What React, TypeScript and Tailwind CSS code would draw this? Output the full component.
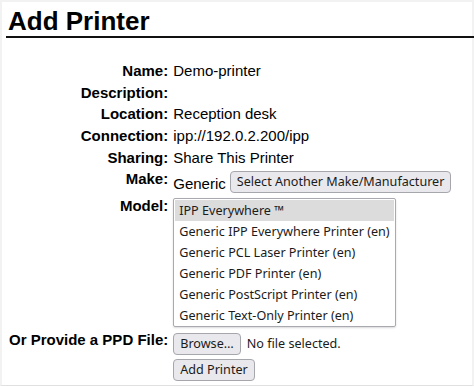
import React from "react";

const sans = { fontFamily: '"Liberation Sans", Arial, sans-serif' };
const ui = { fontFamily: '"Noto Sans", "Open Sans", sans-serif' };

const options = [
  "IPP Everywhere ™",
  "Generic IPP Everywhere Printer (en)",
  "Generic PCL Laser Printer (en)",
  "Generic PDF Printer (en)",
  "Generic PostScript Printer (en)",
  "Generic Text-Only Printer (en)",
];

function Btn({ children, className = "" }: { children: React.ReactNode; className?: string }) {
  return (
    <span
      className={`inline-flex items-center h-[22px] px-[6px] rounded-[4px] border border-[#a6a6ad] bg-[#e9e9ed] text-[12.6px] text-[#1b1b1b] leading-none ${className}`}
      style={ui}
    >
      {children}
    </span>
  );
}

export default function App() {
  return (
    <div className="w-[474px] h-[386px] bg-white overflow-hidden text-black" style={sans}>
      <div className="h-full border-t-2 border-x-2 border-[#f2f2f2] border-b border-b-[#e0e0e0]">
        <h2 className="ml-[4px] mr-[-2px] pt-[4px] h-[36px] border-b-2 border-[#111] text-[26px] font-bold leading-[30px] pl-[2px]">
          Add Printer
        </h2>
        <div className="grid grid-cols-[max-content_1fr] gap-x-[5px] pl-[7px] pt-[24px] text-[15px] leading-[17px]">
          <div className="text-right font-bold h-[21.7px]">Name:</div>
          <div className="h-[21.7px]">Demo-printer</div>
          <div className="text-right font-bold h-[21.7px]">Description:</div>
          <div className="h-[21.7px]"></div>
          <div className="text-right font-bold h-[21.7px]">Location:</div>
          <div className="h-[21.7px]">Reception desk</div>
          <div className="text-right font-bold h-[21.7px]">Connection:</div>
          <div className="h-[21.7px]">ipp://192.0.2.200/ipp</div>
          <div className="text-right font-bold h-[21.2px]">Sharing:</div>
          <div className="h-[21.2px]">Share This Printer</div>

          <div className="text-right font-bold h-[26px]">Make:</div>
          <div className="h-[26px] flex items-center gap-[3px] pb-[2px]">
            <span className="mt-[3px]">Generic</span>
            <Btn className="ml-[1px]">Select Another Make/Manufacturer</Btn>
          </div>

          <div className="text-right font-bold pt-[1px]">Model:</div>
          <div className="pt-[2px] pb-[3px]">
            <div
              className="w-[223px] h-[129px] border border-[#a9a9b0] rounded-[2px] shadow-[0_1px_2px_rgba(0,0,0,0.15)] p-[1px] text-[12.6px] text-[#1b1b1b]"
              style={ui}
            >
              {options.map((o, i) => (
                <div
                  key={o}
                  className={`h-[21px] flex items-center pl-[4px] whitespace-nowrap ${i === 0 ? "bg-[#dcdcdc]" : ""}`}
                >
                  {o}
                </div>
              ))}
            </div>
          </div>

          <div className="text-right font-bold pt-[1px]">Or Provide a PPD File:</div>
          <div className="flex items-center gap-[6px] pt-[3px]">
            <Btn>Browse…</Btn>
            <span className="text-[12.6px] text-[#1b1b1b]" style={ui}>No file selected.</span>
          </div>

          <div></div>
          <div className="pt-[4px]">
            <Btn>Add Printer</Btn>
          </div>
        </div>
      </div>
    </div>
  );
}
